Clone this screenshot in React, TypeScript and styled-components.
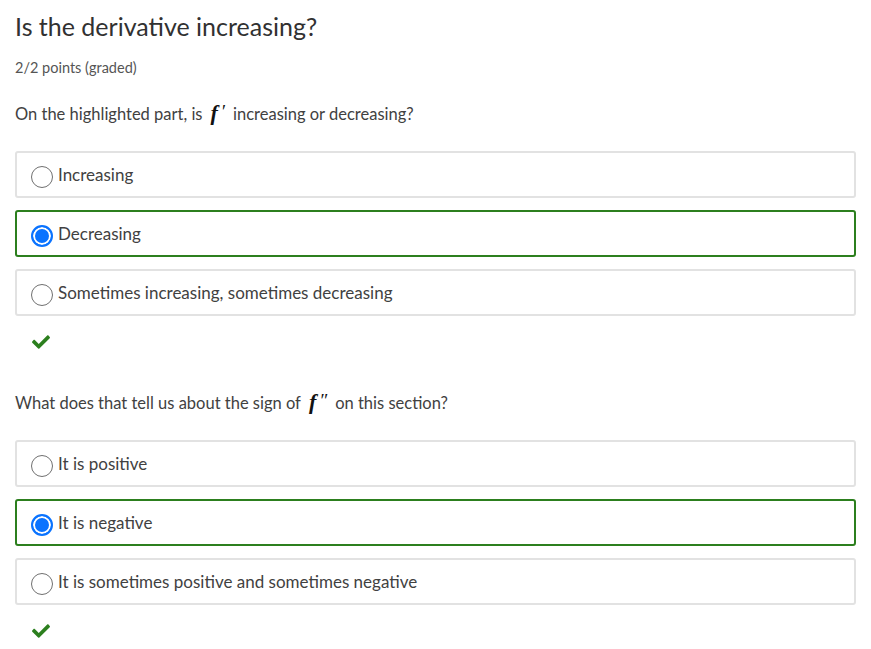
import * as React from "react";
import styled, { createGlobalStyle } from "styled-components";

const GlobalStyle = createGlobalStyle`
  body {
    margin: 0;
    background: #fff;
    font-family: Lato, "Open Sans", sans-serif;
    color: #313131;
  }
`;

const Page = styled.div`
  padding: 9px 15px 0 15px;
  width: 841px;
`;

const Title = styled.h2`
  margin: 0;
  font-size: 25px;
  font-weight: 400;
  line-height: 34px;
  color: #313131;
`;

const Points = styled.div`
  margin-top: 16px;
  font-size: 14.5px;
  color: #555;
`;

const Prompt = styled.p<{ $top: number }>`
  margin: ${(p) => p.$top}px 0 0 0;
  font-size: 16.5px;
  line-height: 24px;
  color: #414141;
`;

const Math = styled.span`
  font-family: "Liberation Serif", "DejaVu Serif", serif;
  font-style: italic;
  font-weight: 700;
  font-size: 22px;
  margin: 0 8px 0 8px;
  color: #111;
`;

const Prime = styled.span`
  font-weight: 400;
  margin-left: 3px;
  vertical-align: 2px;
  font-size: 19px;
`;

const Choices = styled.div`
  display: flex;
  flex-direction: column;
  gap: 12px;
  margin-top: 25px;
`;

const Choice = styled.label<{ $correct: boolean }>`
  display: flex;
  align-items: center;
  gap: 5px;
  height: 47px;
  box-sizing: border-box;
  padding: 0 14px;
  border: 2px solid ${(p) => (p.$correct ? "#2c7f1e" : "#e2e2e2")};
  border-radius: 3px;
  font-size: 17px;
  color: #414141;
  cursor: pointer;
`;

const Radio = styled.span<{ $checked: boolean }>`
  width: 22px;
  height: 22px;
  box-sizing: border-box;
  border-radius: 50%;
  border: ${(p) => (p.$checked ? "2px solid #0a73ff" : "1px solid #707070")};
  background: ${(p) => (p.$checked ? "#0a73ff" : "#fff")};
  box-shadow: ${(p) => (p.$checked ? "inset 0 0 0 2px #fff" : "none")};
  flex: none;
  margin-top: 5px;
`;

const Status = styled.div`
  height: 30px;
  padding: 17px 0 0 17px;
  color: #2c7f1e;
`;

type Question = {
  before: string;
  primes: string;
  after: string;
  options: string[];
  picked: number;
};

const questions: Question[] = [
  {
    before: "On the highlighted part, is",
    primes: "\u2032",
    after: "increasing or decreasing?",
    options: ["Increasing", "Decreasing", "Sometimes increasing, sometimes decreasing"],
    picked: 1,
  },
  {
    before: "What does that tell us about the sign of",
    primes: "\u2033",
    after: "on this section?",
    options: ["It is positive", "It is negative", "It is sometimes positive and sometimes negative"],
    picked: 1,
  },
];

const Check = () => (
  <svg width="18" height="15" viewBox="0 0 512 420">
    <path
      fill="currentColor"
      d="M173.9 409.4L7.5 243c-10-10-10-26.2 0-36.2l36.2-36.2c10-10 26.2-10 36.2 0L192 282.7 432.1 42.6c10-10 26.2-10 36.2 0l36.2 36.2c10 10 10 26.2 0 36.2L210.1 409.4c-10 10-26.2 10-36.2 0z"
    />
  </svg>
);

export default function App() {
  return (
    <Page>
      <GlobalStyle />
      <Title>Is the derivative increasing?</Title>
      <Points>2/2 points (graded)</Points>
      {questions.map((q, i) => (
        <section key={i}>
          <Prompt $top={i === 0 ? 24 : 26}>
            {q.before}
            <Math>
              f<Prime>{q.primes}</Prime>
            </Math>
            {q.after}
          </Prompt>
          <Choices>
            {q.options.map((o, j) => (
              <Choice key={o} $correct={j === q.picked}>
                <Radio $checked={j === q.picked} />
                {o}
              </Choice>
            ))}
          </Choices>
          <Status>
            <Check />
          </Status>
        </section>
      ))}
    </Page>
  );
}
